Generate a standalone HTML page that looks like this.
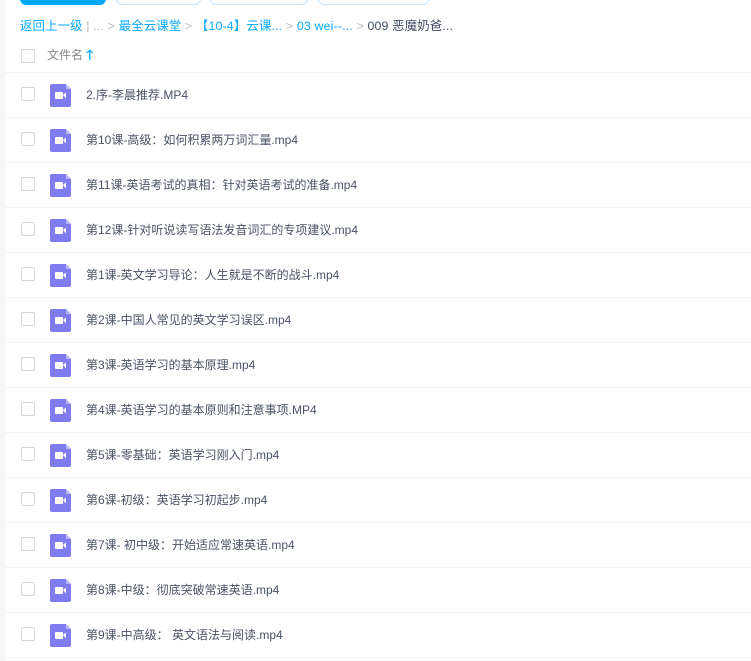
<!DOCTYPE html><html><head><meta charset="utf-8"><style>
body{margin:0;width:751px;height:661px;overflow:hidden;background:#fff;font-family:"Liberation Sans","Noto Sans CJK SC",sans-serif;position:relative}
.strip{position:absolute;left:0;top:0;width:5px;height:661px;background:#f5f6f8}
.btn{position:absolute;top:-8px;height:11px;border:1px solid #c4e3ff;border-radius:6px}
.bc{position:absolute;top:16px;left:20px;font-size:12.4px;color:#09aaff;white-space:nowrap;letter-spacing:0.15px}
.bc .g{color:#bbb}.bc .d{color:#424e67}
.hdr{position:absolute;top:46px;left:47px;font-size:12px;color:#888}
.cb{position:absolute;left:21px;width:12px;height:12px;border:1px solid #d4d7de;border-radius:2px;background:#fff}
.row{position:absolute;left:5px;right:0;height:44px;border-bottom:1px solid #f2f5fa}
.row .cb{left:16px;top:14px}
.ic{position:absolute;left:45px;top:11px}
.t{position:absolute;left:81px;top:13px;font-size:12px;color:#4a5266;white-space:nowrap}
</style></head><body>
<div class="strip"></div>
<div class="btn" style="left:20px;width:84px;background:#06a7ff;border-color:#06a7ff"></div>
<div class="btn" style="left:116px;width:83px"></div>
<div class="btn" style="left:210px;width:96px"></div>
<div class="btn" style="left:318px;width:109px"></div>
<div class="bc">返回上一级 <span class="g">|</span> <span class="g">...</span> <span class="g">&gt;</span> 最全云课堂 <span class="g">&gt;</span> 【10-4】云课... <span class="g">&gt;</span> 03 wei--... <span class="g">&gt;</span> <span class="d">009 恶魔奶爸...</span></div>
<div class="cb" style="top:49px"></div>
<div class="hdr">文件名 <span style="color:#09aaff;font-weight:bold;font-size:13px">🡑</span></div>
<div class="row" style="top:28px;height:44px;left:5px"></div>
<div class="row" style="top:73px"><div class="cb"></div><svg class="ic" width="21" height="23"><path d="M2 0H16L21 5V21A2 2 0 0 1 19 23H2A2 2 0 0 1 0 21V2A2 2 0 0 1 2 0Z" fill="#7f7bf0"/><path d="M16 0V5H21Z" fill="#b9b6f7"/><rect x="5" y="8" width="8" height="7" rx="1" fill="#fff"/><path d="M13 11L16 8.5V14.5Z" fill="#fff"/></svg><div class="t">2.序-李晨推荐.MP4</div></div>
<div class="row" style="top:118px"><div class="cb"></div><svg class="ic" width="21" height="23"><path d="M2 0H16L21 5V21A2 2 0 0 1 19 23H2A2 2 0 0 1 0 21V2A2 2 0 0 1 2 0Z" fill="#7f7bf0"/><path d="M16 0V5H21Z" fill="#b9b6f7"/><rect x="5" y="8" width="8" height="7" rx="1" fill="#fff"/><path d="M13 11L16 8.5V14.5Z" fill="#fff"/></svg><div class="t">第10课-高级：如何积累两万词汇量.mp4</div></div>
<div class="row" style="top:163px"><div class="cb"></div><svg class="ic" width="21" height="23"><path d="M2 0H16L21 5V21A2 2 0 0 1 19 23H2A2 2 0 0 1 0 21V2A2 2 0 0 1 2 0Z" fill="#7f7bf0"/><path d="M16 0V5H21Z" fill="#b9b6f7"/><rect x="5" y="8" width="8" height="7" rx="1" fill="#fff"/><path d="M13 11L16 8.5V14.5Z" fill="#fff"/></svg><div class="t">第11课-英语考试的真相：针对英语考试的准备.mp4</div></div>
<div class="row" style="top:208px"><div class="cb"></div><svg class="ic" width="21" height="23"><path d="M2 0H16L21 5V21A2 2 0 0 1 19 23H2A2 2 0 0 1 0 21V2A2 2 0 0 1 2 0Z" fill="#7f7bf0"/><path d="M16 0V5H21Z" fill="#b9b6f7"/><rect x="5" y="8" width="8" height="7" rx="1" fill="#fff"/><path d="M13 11L16 8.5V14.5Z" fill="#fff"/></svg><div class="t">第12课-针对听说读写语法发音词汇的专项建议.mp4</div></div>
<div class="row" style="top:253px"><div class="cb"></div><svg class="ic" width="21" height="23"><path d="M2 0H16L21 5V21A2 2 0 0 1 19 23H2A2 2 0 0 1 0 21V2A2 2 0 0 1 2 0Z" fill="#7f7bf0"/><path d="M16 0V5H21Z" fill="#b9b6f7"/><rect x="5" y="8" width="8" height="7" rx="1" fill="#fff"/><path d="M13 11L16 8.5V14.5Z" fill="#fff"/></svg><div class="t">第1课-英文学习导论：人生就是不断的战斗.mp4</div></div>
<div class="row" style="top:298px"><div class="cb"></div><svg class="ic" width="21" height="23"><path d="M2 0H16L21 5V21A2 2 0 0 1 19 23H2A2 2 0 0 1 0 21V2A2 2 0 0 1 2 0Z" fill="#7f7bf0"/><path d="M16 0V5H21Z" fill="#b9b6f7"/><rect x="5" y="8" width="8" height="7" rx="1" fill="#fff"/><path d="M13 11L16 8.5V14.5Z" fill="#fff"/></svg><div class="t">第2课-中国人常见的英文学习误区.mp4</div></div>
<div class="row" style="top:343px"><div class="cb"></div><svg class="ic" width="21" height="23"><path d="M2 0H16L21 5V21A2 2 0 0 1 19 23H2A2 2 0 0 1 0 21V2A2 2 0 0 1 2 0Z" fill="#7f7bf0"/><path d="M16 0V5H21Z" fill="#b9b6f7"/><rect x="5" y="8" width="8" height="7" rx="1" fill="#fff"/><path d="M13 11L16 8.5V14.5Z" fill="#fff"/></svg><div class="t">第3课-英语学习的基本原理.mp4</div></div>
<div class="row" style="top:388px"><div class="cb"></div><svg class="ic" width="21" height="23"><path d="M2 0H16L21 5V21A2 2 0 0 1 19 23H2A2 2 0 0 1 0 21V2A2 2 0 0 1 2 0Z" fill="#7f7bf0"/><path d="M16 0V5H21Z" fill="#b9b6f7"/><rect x="5" y="8" width="8" height="7" rx="1" fill="#fff"/><path d="M13 11L16 8.5V14.5Z" fill="#fff"/></svg><div class="t">第4课-英语学习的基本原则和注意事项.MP4</div></div>
<div class="row" style="top:433px"><div class="cb"></div><svg class="ic" width="21" height="23"><path d="M2 0H16L21 5V21A2 2 0 0 1 19 23H2A2 2 0 0 1 0 21V2A2 2 0 0 1 2 0Z" fill="#7f7bf0"/><path d="M16 0V5H21Z" fill="#b9b6f7"/><rect x="5" y="8" width="8" height="7" rx="1" fill="#fff"/><path d="M13 11L16 8.5V14.5Z" fill="#fff"/></svg><div class="t">第5课-零基础：英语学习刚入门.mp4</div></div>
<div class="row" style="top:478px"><div class="cb"></div><svg class="ic" width="21" height="23"><path d="M2 0H16L21 5V21A2 2 0 0 1 19 23H2A2 2 0 0 1 0 21V2A2 2 0 0 1 2 0Z" fill="#7f7bf0"/><path d="M16 0V5H21Z" fill="#b9b6f7"/><rect x="5" y="8" width="8" height="7" rx="1" fill="#fff"/><path d="M13 11L16 8.5V14.5Z" fill="#fff"/></svg><div class="t">第6课-初级：英语学习初起步.mp4</div></div>
<div class="row" style="top:523px"><div class="cb"></div><svg class="ic" width="21" height="23"><path d="M2 0H16L21 5V21A2 2 0 0 1 19 23H2A2 2 0 0 1 0 21V2A2 2 0 0 1 2 0Z" fill="#7f7bf0"/><path d="M16 0V5H21Z" fill="#b9b6f7"/><rect x="5" y="8" width="8" height="7" rx="1" fill="#fff"/><path d="M13 11L16 8.5V14.5Z" fill="#fff"/></svg><div class="t">第7课- 初中级：开始适应常速英语.mp4</div></div>
<div class="row" style="top:568px"><div class="cb"></div><svg class="ic" width="21" height="23"><path d="M2 0H16L21 5V21A2 2 0 0 1 19 23H2A2 2 0 0 1 0 21V2A2 2 0 0 1 2 0Z" fill="#7f7bf0"/><path d="M16 0V5H21Z" fill="#b9b6f7"/><rect x="5" y="8" width="8" height="7" rx="1" fill="#fff"/><path d="M13 11L16 8.5V14.5Z" fill="#fff"/></svg><div class="t">第8课-中级：彻底突破常速英语.mp4</div></div>
<div class="row" style="top:613px"><div class="cb"></div><svg class="ic" width="21" height="23"><path d="M2 0H16L21 5V21A2 2 0 0 1 19 23H2A2 2 0 0 1 0 21V2A2 2 0 0 1 2 0Z" fill="#7f7bf0"/><path d="M16 0V5H21Z" fill="#b9b6f7"/><rect x="5" y="8" width="8" height="7" rx="1" fill="#fff"/><path d="M13 11L16 8.5V14.5Z" fill="#fff"/></svg><div class="t">第9课-中高级： 英文语法与阅读.mp4</div></div>
</body></html>
